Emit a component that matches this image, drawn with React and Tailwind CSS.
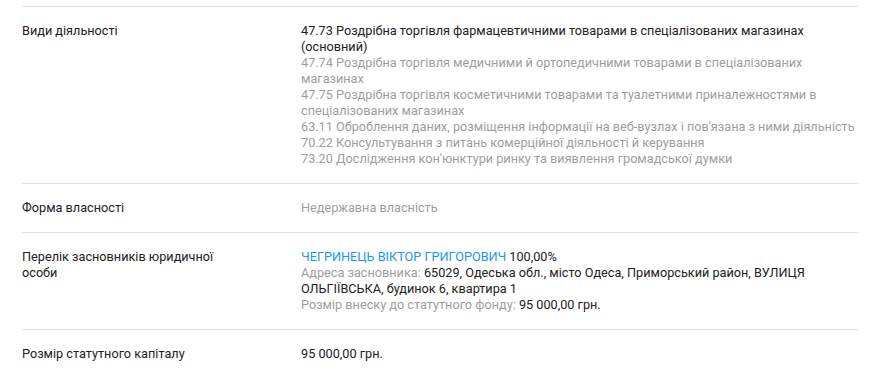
import React from 'react';

const activities = [
  { text: '47.73 Роздрібна торгівля фармацевтичними товарами в спеціалізованих магазинах (основний)', main: true },
  { text: '47.74 Роздрібна торгівля медичними й ортопедичними товарами в спеціалізованих магазинах' },
  { text: '47.75 Роздрібна торгівля косметичними товарами та туалетними приналежностями в спеціалізованих магазинах' },
  { text: "63.11 Оброблення даних, розміщення інформації на веб-вузлах і пов'язана з ними діяльність" },
  { text: '70.22 Консультування з питань комерційної діяльності й керування' },
  { text: "73.20 Дослідження кон'юнктури ринку та виявлення громадської думки" },
];

const Row = ({ label, children }) => (
  <div className="grid grid-cols-[279px_1fr] border-t border-[#e0e0e0] py-4">
    <div className="max-w-[215px] text-[#212121]">{label}</div>
    <div>{children}</div>
  </div>
);

const App = () => {
  return (
    <div
      className="bg-white min-h-[376px] pt-[6px] pl-[22px] pr-[21px] text-[12.7px] leading-4"
      style={{ fontFamily: 'Roboto, "Noto Sans", sans-serif' }}
    >
      <Row label="Види діяльності">
        {activities.map((a, i) => (
          <div key={i} className={a.main ? 'text-[#212121]' : 'text-[#9e9e9e]'}>
            {a.text}
          </div>
        ))}
      </Row>

      <Row label="Форма власності">
        <div className="text-[#9e9e9e]">Недержавна власність</div>
      </Row>

      <Row label="Перелік засновників юридичної особи">
        <div>
          <a href="#" className="text-[#2196f3]">ЧЕГРИНЕЦЬ ВІКТОР ГРИГОРОВИЧ</a>{' '}
          <span className="text-[#212121]">100,00%</span>
        </div>
        <div>
          <span className="text-[#9e9e9e]">Адреса засновника:</span>{' '}
          <span className="text-[#212121]">
            65029, Одеська обл., місто Одеса, Приморський район, ВУЛИЦЯ ОЛЬГІЇВСЬКА, будинок 6, квартира 1
          </span>
        </div>
        <div>
          <span className="text-[#9e9e9e]">Розмір внеску до статутного фонду:</span>{' '}
          <span className="text-[#212121]">95 000,00 грн.</span>
        </div>
      </Row>

      <Row label="Розмір статутного капіталу">
        <div className="text-[#212121]">95 000,00 грн.</div>
      </Row>
    </div>
  );
};

export default App;
